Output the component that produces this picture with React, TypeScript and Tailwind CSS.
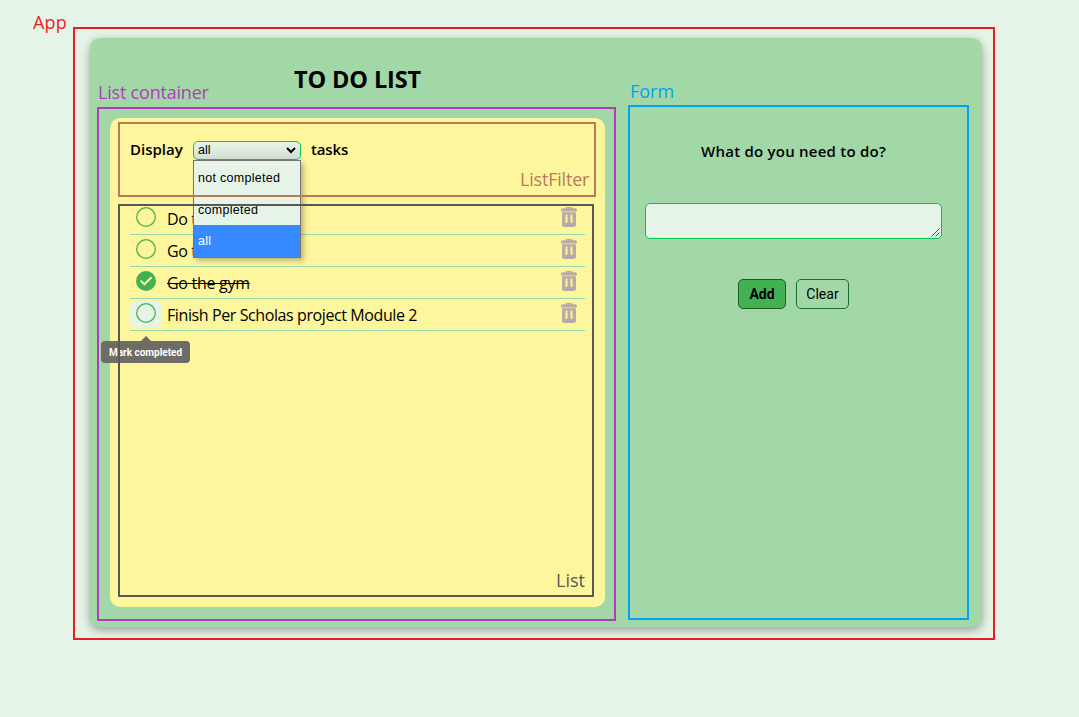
import React from "react";

const tasks = [
  { text: "Do t", done: false, hover: false },
  { text: "Go t", done: false, hover: false },
  { text: "Go the gym", done: true, hover: false },
  { text: "Finish Per Scholas project Module 2", done: false, hover: true },
];

function CheckIcon({ done }: { done: boolean }) {
  return (
    <svg width="20" height="20" viewBox="0 0 20 20" fill="none">
      {done ? (
        <>
          <circle cx="10" cy="10" r="10" fill="#43b052" />
          <path d="M4.6 9.6 8.4 13.3 15.5 6.3" stroke="#fff59d" strokeWidth="2" />
        </>
      ) : (
        <circle cx="10" cy="10" r="9.3" stroke="#4caf50" strokeWidth="1.3" />
      )}
    </svg>
  );
}

function TrashIcon() {
  return (
    <svg width="16" height="20" viewBox="0 0 16 20" fill="#bcaaa4">
      <path d="M0 4.2V3Q0 1.3 1.8 1.3H4Q5 0 6.5 0H9.5Q11 0 12 1.3H14.2Q16 1.3 16 3V4.2Z" />
      <path
        fillRule="evenodd"
        d="M1 5.2H15V17.5Q15 20 12.5 20H3.5Q1 20 1 17.5ZM5.4 7.5Q4.5 7.5 4.5 8.4V15Q4.5 16 5.4 16Q6.5 16 6.5 15V8.4Q6.5 7.5 5.4 7.5ZM10.5 7.5Q9.5 7.5 9.5 8.4V15Q9.5 16 10.5 16Q11.5 16 11.5 15V8.4Q11.5 7.5 10.5 7.5Z"
      />
      <path d="M0.5 4.2H15.5V5.2H0.5Z" opacity=".5" />
    </svg>
  );
}

function Filter() {
  return (
    <div className="flex h-[62px] items-center text-[15px] font-semibold">
      <span className="relative -top-px w-[63px]">Display</span>
      <div className="relative h-[19px] w-[108px] font-['Liberation_Sans',sans-serif] text-[12.5px] font-normal">
        <div className="flex h-[19px] items-center justify-between rounded-[5px] border border-[#00c853] bg-linear-to-b from-[#e8f5e9] to-[#d2ded3] pr-[4px] pl-1">
          <span className="pt-px">all</span>
          <svg width="10" height="7" viewBox="0 0 10 7" fill="none">
            <path d="M1 1 5 5 9 1" stroke="#000" strokeWidth="2" />
          </svg>
        </div>
        <div className="absolute top-[19px] left-0 z-10 h-[98px] w-[108px] border border-[#757575] bg-[#e6f4e7] tracking-[0.28px] shadow-[3px_3px_5px_rgba(0,0,0,0.25)]">
          <div className="flex h-8 items-center pt-[3px] pl-1">not completed</div>
          <div className="flex h-8 items-center pt-[3px] pl-1">completed</div>
          <div className="flex h-8 items-center bg-[#3789ff] pt-[2px] pl-1 text-white">all</div>
        </div>
      </div>
      <span className="relative -top-px ml-[10px] tracking-[-0.15px]">tasks</span>
    </div>
  );
}

function TaskList() {
  return (
    <ul className="mt-[22px]">
      {tasks.map((t) => (
        <li key={t.text} className="flex h-8 items-start border-b border-[#96d8ae]">
          <div
            className={
              t.hover
                ? "relative mt-[3px] flex h-[25px] w-8 justify-center rounded-[5px] bg-[#e6f4e7] pt-px"
                : "relative mt-[3px] flex h-[25px] w-8 justify-center pt-px"
            }
          >
            <CheckIcon done={t.done} />
            {t.hover && (
              <div className="absolute top-[39px] left-[-29px] flex h-[22px] w-[89px] items-center justify-center rounded bg-[#6d6d66] font-[Roboto,sans-serif] text-[10px] font-bold whitespace-nowrap text-white">
                Mark completed
                <svg className="absolute top-[-5px] left-[40px]" width="10" height="5" viewBox="0 0 10 5">
                  <path d="M0 5 5 0 10 5Z" fill="#6d6d66" />
                </svg>
              </div>
            )}
          </div>
          <span
            className={
              t.done
                ? "mt-1 ml-[5px] flex-1 text-[16px] leading-6 tracking-[-0.28px] line-through"
                : "mt-1 ml-[5px] flex-1 text-[16px] leading-6 tracking-[-0.4px]"
            }
          >
            {t.text}
          </span>
          <div className="mt-1 mr-2">
            <TrashIcon />
          </div>
        </li>
      ))}
    </ul>
  );
}

function Form() {
  return (
    <section className="flex w-[297px] flex-col items-center">
      <p className="mt-[101px] text-[15px] leading-6 font-semibold tracking-[0.23px]">What do you need to do?</p>
      <div className="mt-10 flex h-9 w-full items-end justify-end rounded-[5px] border border-[#00c853] bg-[#e6f4e7] p-px">
        <svg width="9" height="9" viewBox="0 0 9 9" stroke="#555" strokeWidth="1">
          <path d="M0.5 8.5 8.5 0.5M4.5 8.5 8.5 4.5" />
        </svg>
      </div>
      <div className="mt-10 flex gap-[10px] font-[Roboto,sans-serif] text-[14px]">
        <button className="h-[30px] w-12 rounded-[5px] border border-[#1b5e20] bg-[#43b052] font-bold">Add</button>
        <button className="h-[30px] w-[53px] rounded-[5px] border border-[#1b6e2a]">Clear</button>
      </div>
    </section>
  );
}

function Annotations() {
  return (
    <div className="pointer-events-none absolute inset-0 z-20 text-[18px] leading-6 whitespace-nowrap">
      <div className="absolute top-[27px] left-[73px] h-[613px] w-[922px] border-2 border-[#ed1c24]" />
      <div className="absolute top-[107px] left-[97px] h-[514px] w-[519px] border-2 border-[#b13dba]" />
      <div className="absolute top-[105px] left-[628px] h-[515px] w-[341px] border-2 border-[#00a2f3]" />
      <div className="absolute top-[122px] left-[118px] h-[75px] w-[478px] border-2 border-[#b97a57]" />
      <div className="absolute top-[204px] left-[118px] h-[393px] w-[476px] border-2 border-[#585858]" />
      <span className="absolute top-[10px] left-[33px] tracking-[0.2px] text-[#ed1c24]">App</span>
      <span className="absolute top-[80px] left-[98px] tracking-[-0.2px] text-[#b13dba]">List container</span>
      <span className="absolute top-[79px] left-[630px] text-[#00a2f3]">Form</span>
      <span className="absolute top-[167px] left-[520px] tracking-[-0.2px] text-[#b97a57]">ListFilter</span>
      <span className="absolute top-[568px] left-[556px] text-[#585858]">List</span>
    </div>
  );
}

export default function App() {
  return (
    <div className="relative h-[717px] w-[1079px] overflow-hidden bg-[#e6f4e7] pt-[38px] pl-[90px] font-['Open_Sans','Noto_Sans',sans-serif] text-black">
      <main className="flex h-[589px] w-[892px] gap-10 rounded-[10px] bg-[#a2d8a7] px-5 shadow-[0_3px_10px_rgba(0,0,0,0.35)]">
        <section className="w-[495px]">
          <h1 className="flex h-20 items-center justify-center pt-[3px] text-[23.5px] font-bold tracking-[-0.1px]">
            TO DO LIST
          </h1>
          <div className="h-[489px] rounded-[10px] bg-[#fef69c] px-5 pt-px">
            <Filter />
            <TaskList />
          </div>
        </section>
        <Form />
      </main>
      <Annotations />
    </div>
  );
}
